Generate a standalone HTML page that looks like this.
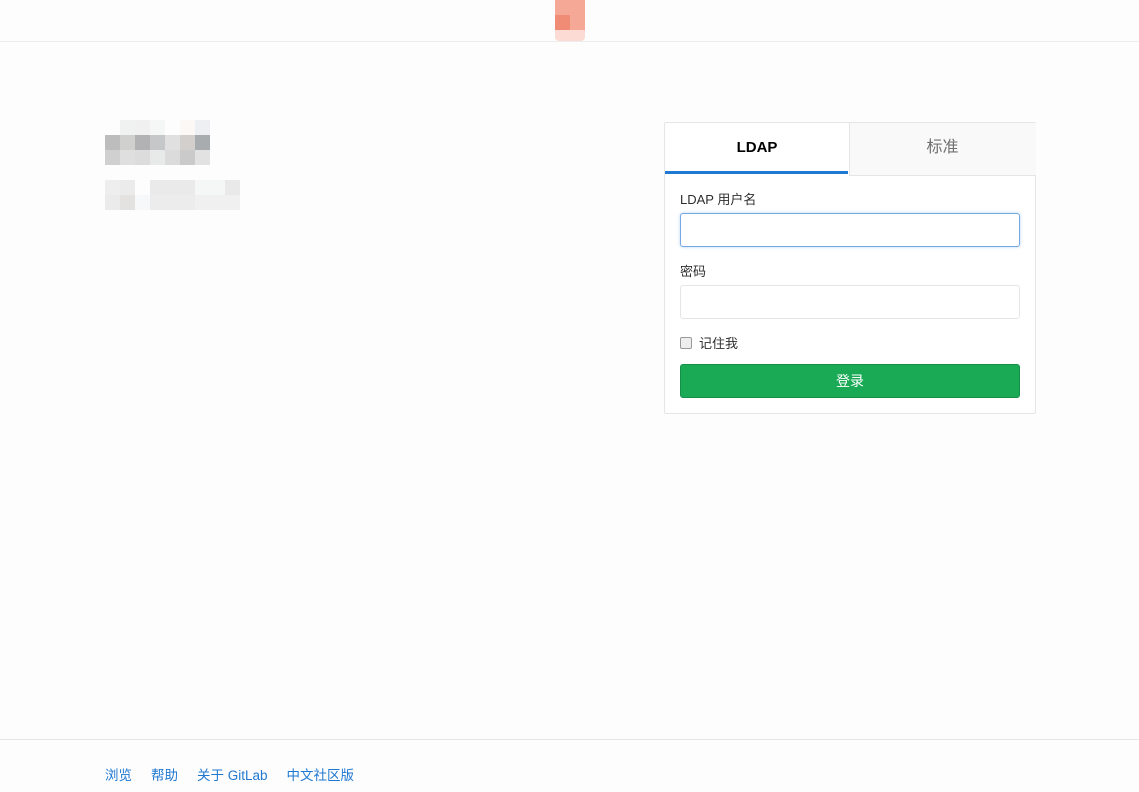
<!DOCTYPE html>
<html><head><meta charset="utf-8"><style>
body{margin:0;width:1139px;height:792px;background:#fdfdfd;font-family:"Liberation Sans","Noto Sans CJK SC",sans-serif;position:relative;overflow:hidden;color:#2e2e2e}
.a{position:absolute}
.px{position:absolute;width:15px;height:15px}
</style></head><body>
<div class="a" style="left:0;top:41px;width:1139px;height:1px;background:#ececec"></div>
<div class="a" style="left:555px;top:0;width:30px;height:30px;background:#f4a895"></div>
<div class="a" style="left:555px;top:15px;width:15px;height:15px;background:#f08c76"></div>
<div class="a" style="left:555px;top:30px;width:30px;height:11px;background:#fcdbd5;border-radius:0 0 4px 4px"></div>

<div class="px" style="left:120px;top:120px;background:#f0f1f1"></div>
<div class="px" style="left:135px;top:120px;background:#f0f0f0"></div>
<div class="px" style="left:150px;top:120px;background:#f5f6f6"></div>
<div class="px" style="left:180px;top:120px;background:#fbf8f6"></div>
<div class="px" style="left:195px;top:120px;background:#eeeff2"></div>
<div class="px" style="left:105px;top:135px;background:#bdbdbd"></div>
<div class="px" style="left:120px;top:135px;background:#d0d0cf"></div>
<div class="px" style="left:135px;top:135px;background:#b2b1b4"></div>
<div class="px" style="left:150px;top:135px;background:#c6c7c9"></div>
<div class="px" style="left:165px;top:135px;background:#e0e0e0"></div>
<div class="px" style="left:180px;top:135px;background:#d3cfcd"></div>
<div class="px" style="left:195px;top:135px;background:#a9acaf"></div>
<div class="px" style="left:105px;top:150px;background:#d0d0d0"></div>
<div class="px" style="left:120px;top:150px;background:#e0dfdf"></div>
<div class="px" style="left:135px;top:150px;background:#dcdcdc"></div>
<div class="px" style="left:150px;top:150px;background:#e8e9e9"></div>
<div class="px" style="left:165px;top:150px;background:#dcdbdb"></div>
<div class="px" style="left:180px;top:150px;background:#cacaca"></div>
<div class="px" style="left:195px;top:150px;background:#e2e2e2"></div>
<div class="px" style="left:105px;top:180px;background:#eeeeee"></div>
<div class="px" style="left:120px;top:180px;background:#ebebeb"></div>
<div class="px" style="left:150px;top:180px;width:45px;background:#eaeaea"></div>
<div class="px" style="left:195px;top:180px;width:30px;background:#f5f6f6"></div>
<div class="px" style="left:225px;top:180px;background:#e9e9e9"></div>
<div class="px" style="left:105px;top:195px;background:#ebebeb"></div>
<div class="px" style="left:120px;top:195px;background:#e3e2e1"></div>
<div class="px" style="left:135px;top:195px;background:#f6f8fa"></div>
<div class="px" style="left:150px;top:195px;width:45px;background:#ececec"></div>
<div class="px" style="left:195px;top:195px;width:45px;background:#f0f0f0"></div>

<div class="a" style="left:664px;top:122px;width:370px;height:290px;border:1px solid #e5e5e5;border-radius:2px;background:#fff"></div>
<div class="a" style="left:849px;top:123px;width:186px;height:52px;background:#f9f9f9;border-left:1px solid #e5e5e5;border-bottom:1px solid #e5e5e5"></div>
<div class="a" style="left:665px;top:124px;width:184px;height:48px;line-height:48px;text-align:center;font-size:15px;font-weight:bold;color:#000">LDAP</div>
<div class="a" style="left:665px;top:171px;width:183px;height:3px;background:#1f78d1"></div>
<div class="a" style="left:850px;top:123px;width:185px;height:50px;line-height:50px;text-align:center;font-size:16px;color:#707070">标准</div>
<div class="a" style="left:680px;top:189px;font-size:13px">LDAP 用户名</div>
<div class="a" style="left:680px;top:213px;width:338px;height:32px;border:1px solid #73a9e5;border-radius:3px;box-shadow:0 0 3px rgba(31,120,209,.3);background:#fff"></div>
<div class="a" style="left:680px;top:261px;font-size:13px">密码</div>
<div class="a" style="left:680px;top:285px;width:338px;height:32px;border:1px solid #e5e5e5;border-radius:3px;background:#fff"></div>
<div class="a" style="left:680px;top:337px;width:10px;height:10px;border:1px solid #999;border-radius:2px;background:#eee"></div>
<div class="a" style="left:699px;top:333px;font-size:13px">记住我</div>
<div class="a" style="left:680px;top:364px;width:338px;height:32px;line-height:32px;background:#1aaa55;border:1px solid #168f48;border-radius:3px;color:#fff;text-align:center;font-size:14px">登录</div>

<div class="a" style="left:0;top:739px;width:1139px;height:1px;background:#e5e5e5"></div>
<div class="a" style="left:105px;top:764px;font-size:13.5px;color:#1f78d1;white-space:nowrap">
<span>浏览</span><span style="margin-left:19px">帮助</span><span style="margin-left:19px">关于 GitLab</span><span style="margin-left:19px">中文社区版</span></div>
</body></html>
